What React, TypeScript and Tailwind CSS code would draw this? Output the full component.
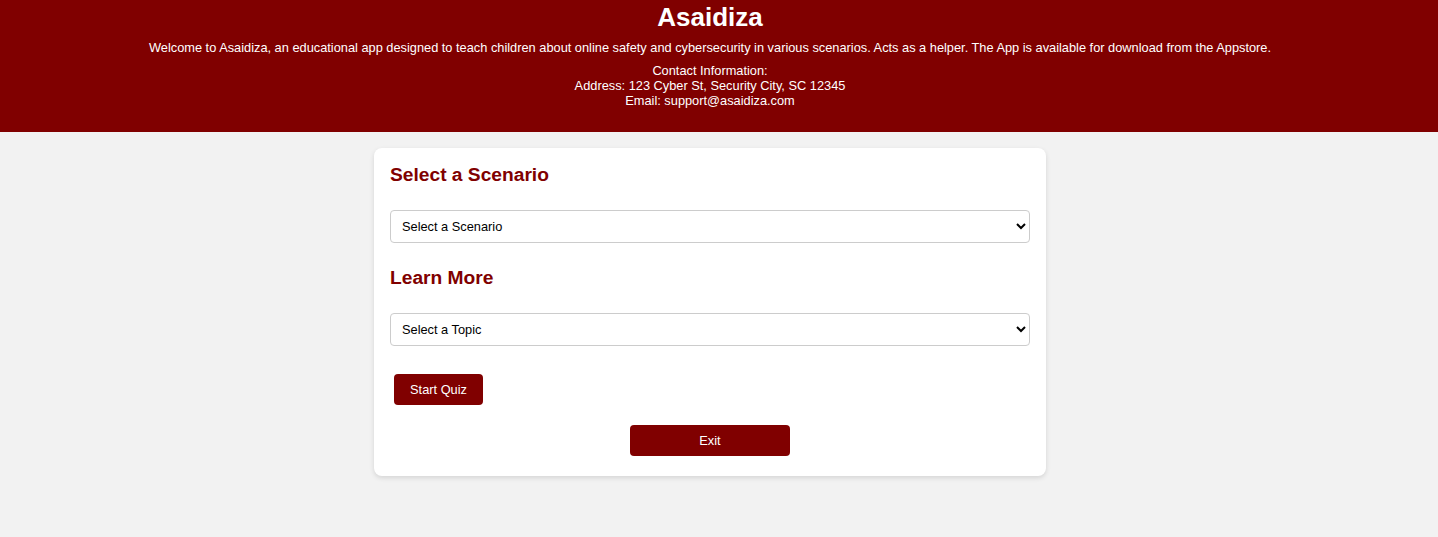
export default function App() {
  return (
    <div className="min-h-[537px] bg-[#f2f2f2] font-['Liberation_Sans',Arial,sans-serif] text-black">
      {/* Header */}
      <header className="bg-[#800000] pt-[2px] pb-[24px] text-white">
        <div className="mr-[18px] px-4 text-center">
          <h1 className="text-[26px] font-bold leading-[30px]">Asaidiza</h1>
          <p className="mt-[8px] text-[12.8px] leading-[15px]">
            Welcome to Asaidiza, an educational app designed to teach children about online safety and cybersecurity in various scenarios. Acts as a helper. The App is available for download from the Appstore.
          </p>
          <div className="mt-[8px] text-[12.8px] leading-[15px]">
            Contact Information:
            <br />
            Address: 123 Cyber St, Security City, SC 12345
            <br />
            Email: support@asaidiza.com
          </div>
        </div>
      </header>

      {/* Main Card */}
      <div className="mr-[18px]">
        <div className="mx-auto mt-4 w-[672px] rounded-lg bg-white px-4 pt-4 pb-5 shadow-[0_2px_5px_rgba(0,0,0,0.12)]">
          <h2 className="pt-px text-[19.2px] font-bold leading-5 text-[#800000]">
            Select a Scenario
          </h2>

          <select className="mt-[25px] h-[33px] w-full rounded-[4px] border border-[#ccc] bg-white pl-[7px] text-[12.8px] text-black">
            <option>Select a Scenario</option>
          </select>

          <h2 className="mt-[24px] pt-px text-[19.2px] font-bold leading-5 text-[#800000]">
            Learn More
          </h2>

          <select className="mt-[25px] h-[33px] w-full rounded-[4px] border border-[#ccc] bg-white pl-[7px] text-[12.8px] text-black">
            <option>Select a Topic</option>
          </select>

          <div className="mt-[28px] pl-1">
            <button className="h-[31px] w-[89px] rounded-[4px] bg-[#800000] text-[12.8px] text-white">
              Start Quiz
            </button>
          </div>

          <div className="mt-5 flex justify-center">
            <button className="h-[31px] w-[160px] rounded-[4px] bg-[#800000] text-[12.8px] text-white">
              Exit
            </button>
          </div>
        </div>
      </div>
    </div>
  );
}
